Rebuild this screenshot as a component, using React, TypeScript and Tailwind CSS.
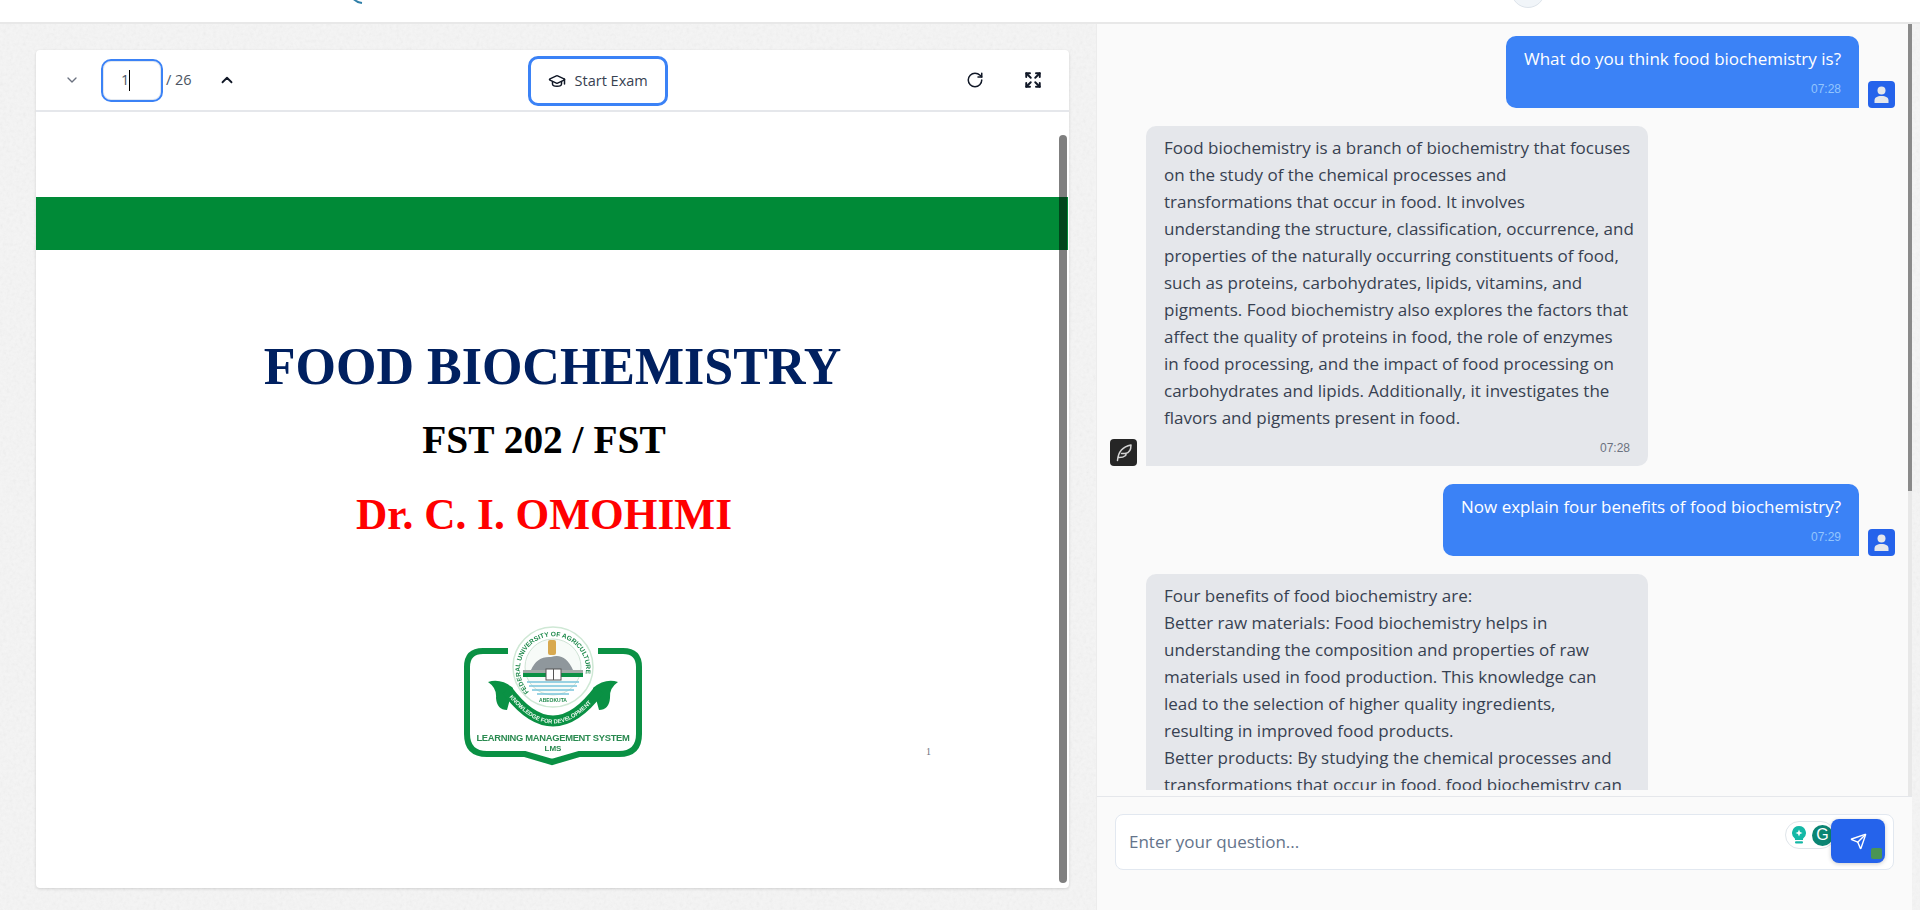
import { ChevronDown, ChevronUp, Expand, GraduationCap, RotateCw, Send } from 'lucide-react'

const uiFont = "font-['Open_Sans','Noto_Sans',sans-serif]"

const answerOne = [
  'Food biochemistry is a branch of biochemistry that focuses',
  'on the study of the chemical processes and',
  'transformations that occur in food. It involves',
  'understanding the structure, classification, occurrence, and',
  'properties of the naturally occurring constituents of food,',
  'such as proteins, carbohydrates, lipids, vitamins, and',
  'pigments. Food biochemistry also explores the factors that',
  'affect the quality of proteins in food, the role of enzymes',
  'in food processing, and the impact of food processing on',
  'carbohydrates and lipids. Additionally, it investigates the',
  'flavors and pigments present in food.',
]

const answerTwo = [
  'Four benefits of food biochemistry are:',
  'Better raw materials: Food biochemistry helps in',
  'understanding the composition and properties of raw',
  'materials used in food production. This knowledge can',
  'lead to the selection of higher quality ingredients,',
  'resulting in improved food products.',
  'Better products: By studying the chemical processes and',
  'transformations that occur in food, food biochemistry can',
  'contribute to the development of new products.',
]

function UserAvatar() {
  return (
    <div className="flex h-[27px] w-[27px] shrink-0 items-center justify-center rounded-[4px] bg-[#2563eb]">
      <svg width="17" height="18" viewBox="0 0 17 18" fill="#e5e7eb">
        <circle cx="8.5" cy="4.6" r="4" />
        <path d="M1.500 17v-2.600C1.500 11.800 4 10 8.500 10s7 1.800 7 4.400V17z" />
      </svg>
    </div>
  )
}

function BotAvatar() {
  return (
    <div className="flex h-[27px] w-[27px] shrink-0 items-center justify-center rounded-[4px] bg-[#262626]">
      <svg width="27" height="27" viewBox="0 0 27 27" fill="none" stroke="#d4d4d4" strokeWidth="1.5" strokeLinecap="round" strokeLinejoin="round">
        <path d="M7.500 21.500 C8 15 10.500 8 21 6 C21 11 19 14 15.500 14.500 C17 15 15.500 18.500 9 18.500" />
        <path d="M15.500 14.500 H11.500" />
      </svg>
    </div>
  )
}

function UserMessage({ text, time }: { text: string; time: string }) {
  return (
    <div className="flex items-end justify-end gap-[9px]">
      <div className="rounded-t-[10px] rounded-bl-[10px] bg-[#3b82f6] px-[18px] pb-[11px] pt-[9px] text-white">
        <p className="text-[17px] leading-[27px]">{text}</p>
        <p className="mt-[9px] text-right font-['Liberation_Sans',sans-serif] text-[12px] leading-[16px] text-[#93c5fd]">{time}</p>
      </div>
      <UserAvatar />
    </div>
  )
}

function BotMessage({ lines, time }: { lines: string[]; time?: string }) {
  return (
    <div className="flex items-end gap-[9px]">
      <BotAvatar />
      <div className="w-[502px] rounded-t-[10px] rounded-br-[10px] bg-[#e5e7eb] px-[18px] pb-[10px] pt-[8px] text-[#374151]">
        {lines.map((line) => (
          <p key={line} className="whitespace-nowrap text-[17px] leading-[27px]">
            {line}
          </p>
        ))}
        {time && <p className="mt-[9px] text-right font-['Liberation_Sans',sans-serif] text-[12px] leading-[16px] text-[#6b7280]">{time}</p>}
      </div>
    </div>
  )
}

function LmsLogo() {
  return (
    <svg width="220" height="170" viewBox="0 0 220 170" className="blur-[0.4px]" fontFamily="Liberation Sans, sans-serif" fontWeight="700">
      <defs>
        <path id="sealRing" d="M 88 82 A 33 33 0 1 1 136 82" />
        <path id="ribbonArc" d="M 66 84 Q 112 143 158 84" />
      </defs>
      <path
        d="M 67 41 H 42 Q 26 41 26 57 V 124 Q 26 144 46 144 H 84 L 111 152 L 138 144 H 178 Q 198 144 198 124 V 57 Q 198 41 182 41 H 157"
        fill="none"
        stroke="#0a9144"
        strokeWidth="6"
      />
      <circle cx="112" cy="57" r="40" fill="#fff" stroke="#cfe8d5" strokeWidth="1.5" />
      <circle cx="112" cy="57" r="28" fill="#f7fbf8" stroke="#cfe3d5" />
      <text fontSize="6.6" fill="#1f8a4c">
        <textPath href="#sealRing">FEDERAL UNIVERSITY OF AGRICULTURE</textPath>
      </text>
      <rect x="107" y="30" width="8" height="15" rx="2" fill="#d8a94f" />
      <path d="M 90 60 Q 96 46 110 47 Q 124 42 132 60 Z" fill="#8f979c" />
      <rect x="82" y="60" width="60" height="3" fill="#a3aaa7" />
      <rect x="82" y="63" width="60" height="4" fill="#0a9144" />
      <rect x="105" y="59" width="15" height="11" fill="#fff" stroke="#555" strokeWidth="1" />
      <path d="M 112.500 59 V 70" stroke="#555" strokeWidth="1" />
      <path d="M 86 72 H 138 M 88 76 H 136 M 91 80 H 133 M 96 84 H 128" stroke="#79c5dc" strokeWidth="1.5" />
      <path d="M 47 72 Q 60 68 72 78 L 66 100 Q 56 100 55 88 Q 56 78 47 72 Z" fill="#0a9144" />
      <path d="M 177 72 Q 164 68 152 78 L 158 100 Q 168 100 169 88 Q 168 78 177 72 Z" fill="#0a9144" />
      <path d="M 66 80 Q 112 142 158 80" fill="none" stroke="#0a9144" strokeWidth="11" />
      <text x="112" y="92" textAnchor="middle" fontSize="5" fill="#1f8a4c">ABEOKUTA</text>
      <text fontSize="5.8" fill="#eef9f1">
        <textPath href="#ribbonArc" startOffset="3%">KNOWLEDGE FOR DEVELOPMENT</textPath>
      </text>
      <text x="112" y="131" textAnchor="middle" fontSize="9.4" fill="#2a8a50" letterSpacing="-0.3">LEARNING MANAGEMENT SYSTEM</text>
      <text x="112" y="141" textAnchor="middle" fontSize="8" fill="#2a8a50">LMS</text>
    </svg>
  )
}

function PdfViewer() {
  return (
    <section className="flex h-[838px] w-[1033px] flex-col overflow-hidden rounded-[4px] bg-white shadow-[0_1px_3px_rgba(0,0,0,0.14)]">
      <div className="flex h-[62px] shrink-0 items-center border-b-2 border-[#e5e7eb] pl-[28px]">
        <ChevronDown size={16} className="text-[#6b7280]" />
        <div className="ml-[21px] flex h-[43px] w-[62px] items-center rounded-[10px] border-2 border-[#3b82f6] pl-[18px] text-[14.5px] text-[#4b5563] shadow-[inset_0_0_0_1px_#e2e8f0]">
          1<span className="h-[21px] w-px bg-black" />
        </div>
        <span className="ml-[3px] text-[14.5px] text-[#4b5563]">/ 26</span>
        <ChevronUp size={18} strokeWidth={2.4} className="ml-[26px] text-[#111827]" />
        <button className="ml-[292px] mt-[2px] flex h-[50px] w-[140px] items-center justify-center gap-[9px] rounded-[10px] border-[3px] border-[#3b82f6] text-[14.5px] text-[#374151]">
          <GraduationCap size={18} className="text-[#111827]" />
          Start Exam
        </button>
        <RotateCw size={18} strokeWidth={2} className="ml-[298px] text-[#111827]" />
        <Expand size={18} strokeWidth={2.6} className="ml-[40px] text-[#111827]" />
      </div>
      <div className="relative flex-1 font-['Liberation_Serif',serif]">
        <div className="mt-[85px] h-[53px] w-[1032px] bg-[#008a37]" />
        <h1 className="mt-[84px] text-center text-[52px] font-bold leading-[66px] text-[#002060]">FOOD BIOCHEMISTRY</h1>
        <p className="mt-[17px] pr-[17px] text-center text-[39.4px] font-bold leading-[46px] text-black">FST 202 / FST</p>
        <p className="mt-[24px] pr-[17px] text-center text-[43.300px] font-bold leading-[54px] text-[#ff0000]">Dr. C. I. OMOHIMI</p>
        <div className="mt-[69px] flex justify-center pr-[4px]">
          <LmsLogo />
        </div>
        {/* page number and viewer scrollbar sit on top of the page */}
        <span className="absolute left-[890px] top-[632px] text-[10px] text-[#6b7280]">1</span>
        <div className="absolute left-[1023px] top-[23px] h-[748px] w-[8px] rounded-full bg-black/50" />
      </div>
    </section>
  )
}

function ChatPanel() {
  return (
    <aside className={`relative flex w-[816px] flex-col border-l border-[#ececec] bg-[#fafafa] ${uiFont}`}>
      <div className="mb-[6px] flex h-[766px] flex-col gap-[18px] overflow-hidden pl-[13px] pr-[17px] pt-[12px]">
        <UserMessage text="What do you think food biochemistry is?" time="07:28" />
        <BotMessage lines={answerOne} time="07:28" />
        <UserMessage text="Now explain four benefits of food biochemistry?" time="07:29" />
        <BotMessage lines={answerTwo} />
      </div>
      <div className="flex-1 border-t border-[#e5e7eb] pl-[18px] pr-[18px] pt-[17px]">
        <div className="relative flex h-[56px] items-center rounded-[8px] border border-[#e2e8f0] bg-white pl-[13px] text-[17px] text-[#64748b]">
          Enter your question...
          {/* grammarly widget overlapping the field */}
          <div className="absolute left-[669px] top-[6px] flex h-[28px] w-[50px] items-center rounded-full border border-[#dfe5ea] bg-white pl-[5px]">
            <svg width="16" height="20" viewBox="0 0 16 20">
              <path d="M8 1a7 7 0 0 0-4 12.700V15h8v-1.300A7 7 0 0 0 8 1z" fill="#14b8a6" />
              <rect x="4" y="16.300" width="8" height="2.200" rx="1" fill="#14b8a6" />
              <path d="M8 4.500l1 2.500 2.500 1-2.500 1-1 2.500-1-2.500-2.500-1 2.500-1z" fill="#fff" />
            </svg>
            <span className="ml-[5px] flex h-[21px] w-[21px] items-center justify-center rounded-full bg-[#0b8573] font-['Liberation_Sans',sans-serif] text-[16px] leading-none text-white">G</span>
          </div>
          <button className="absolute left-[715px] top-[4px] flex h-[44px] w-[54px] items-center justify-center rounded-[8px] bg-[#2563eb] shadow-[0_1px_4px_rgba(0,0,0,0.2)]">
            <Send size={17} className="text-white" />
            <span className="absolute left-[40px] top-[29px] h-[11px] w-[11px] rounded-[2px] bg-[#4a9455]" />
          </button>
        </div>
      </div>
      <div className="absolute right-0 top-0 h-[467px] w-[4px] bg-[#8a8a8a]" />
      <div className="absolute right-0 top-[467px] h-[305px] w-[4px] bg-[#e8e8e8]" />
    </aside>
  )
}

export default function App() {
  return (
    <main className="relative h-[910px] w-[1920px] overflow-hidden bg-[#f5f5f5]">
      <svg className="pointer-events-none absolute inset-0 h-full w-full opacity-[0.1]">
        <filter id="paperNoise">
          <feTurbulence type="fractalNoise" baseFrequency="0.3" numOctaves="3" />
          <feColorMatrix type="saturate" values="0" />
        </filter>
        <rect width="100%" height="100%" filter="url(#paperNoise)" />
      </svg>
      <header className="relative h-[24px] overflow-hidden border-b-2 border-[#e8e8e8] bg-white">
        <svg className="absolute left-[350px] top-0" width="16" height="5" viewBox="0 0 16 5" fill="none">
          <path d="M2 -3 Q5 2 12 3" stroke="#2f7fa8" strokeWidth="2" />
        </svg>
        <div className="absolute left-[1511px] top-[-26px] h-[34px] w-[34px] rounded-full border border-[#dde3ea] bg-[#f1f5f9]" />
      </header>
      <div className={`relative flex ${uiFont}`}>
        <div className="h-[886px] w-[1096px] pl-[36px] pt-[26px]">
          <PdfViewer />
        </div>
        <ChatPanel />
      </div>
    </main>
  )
}
